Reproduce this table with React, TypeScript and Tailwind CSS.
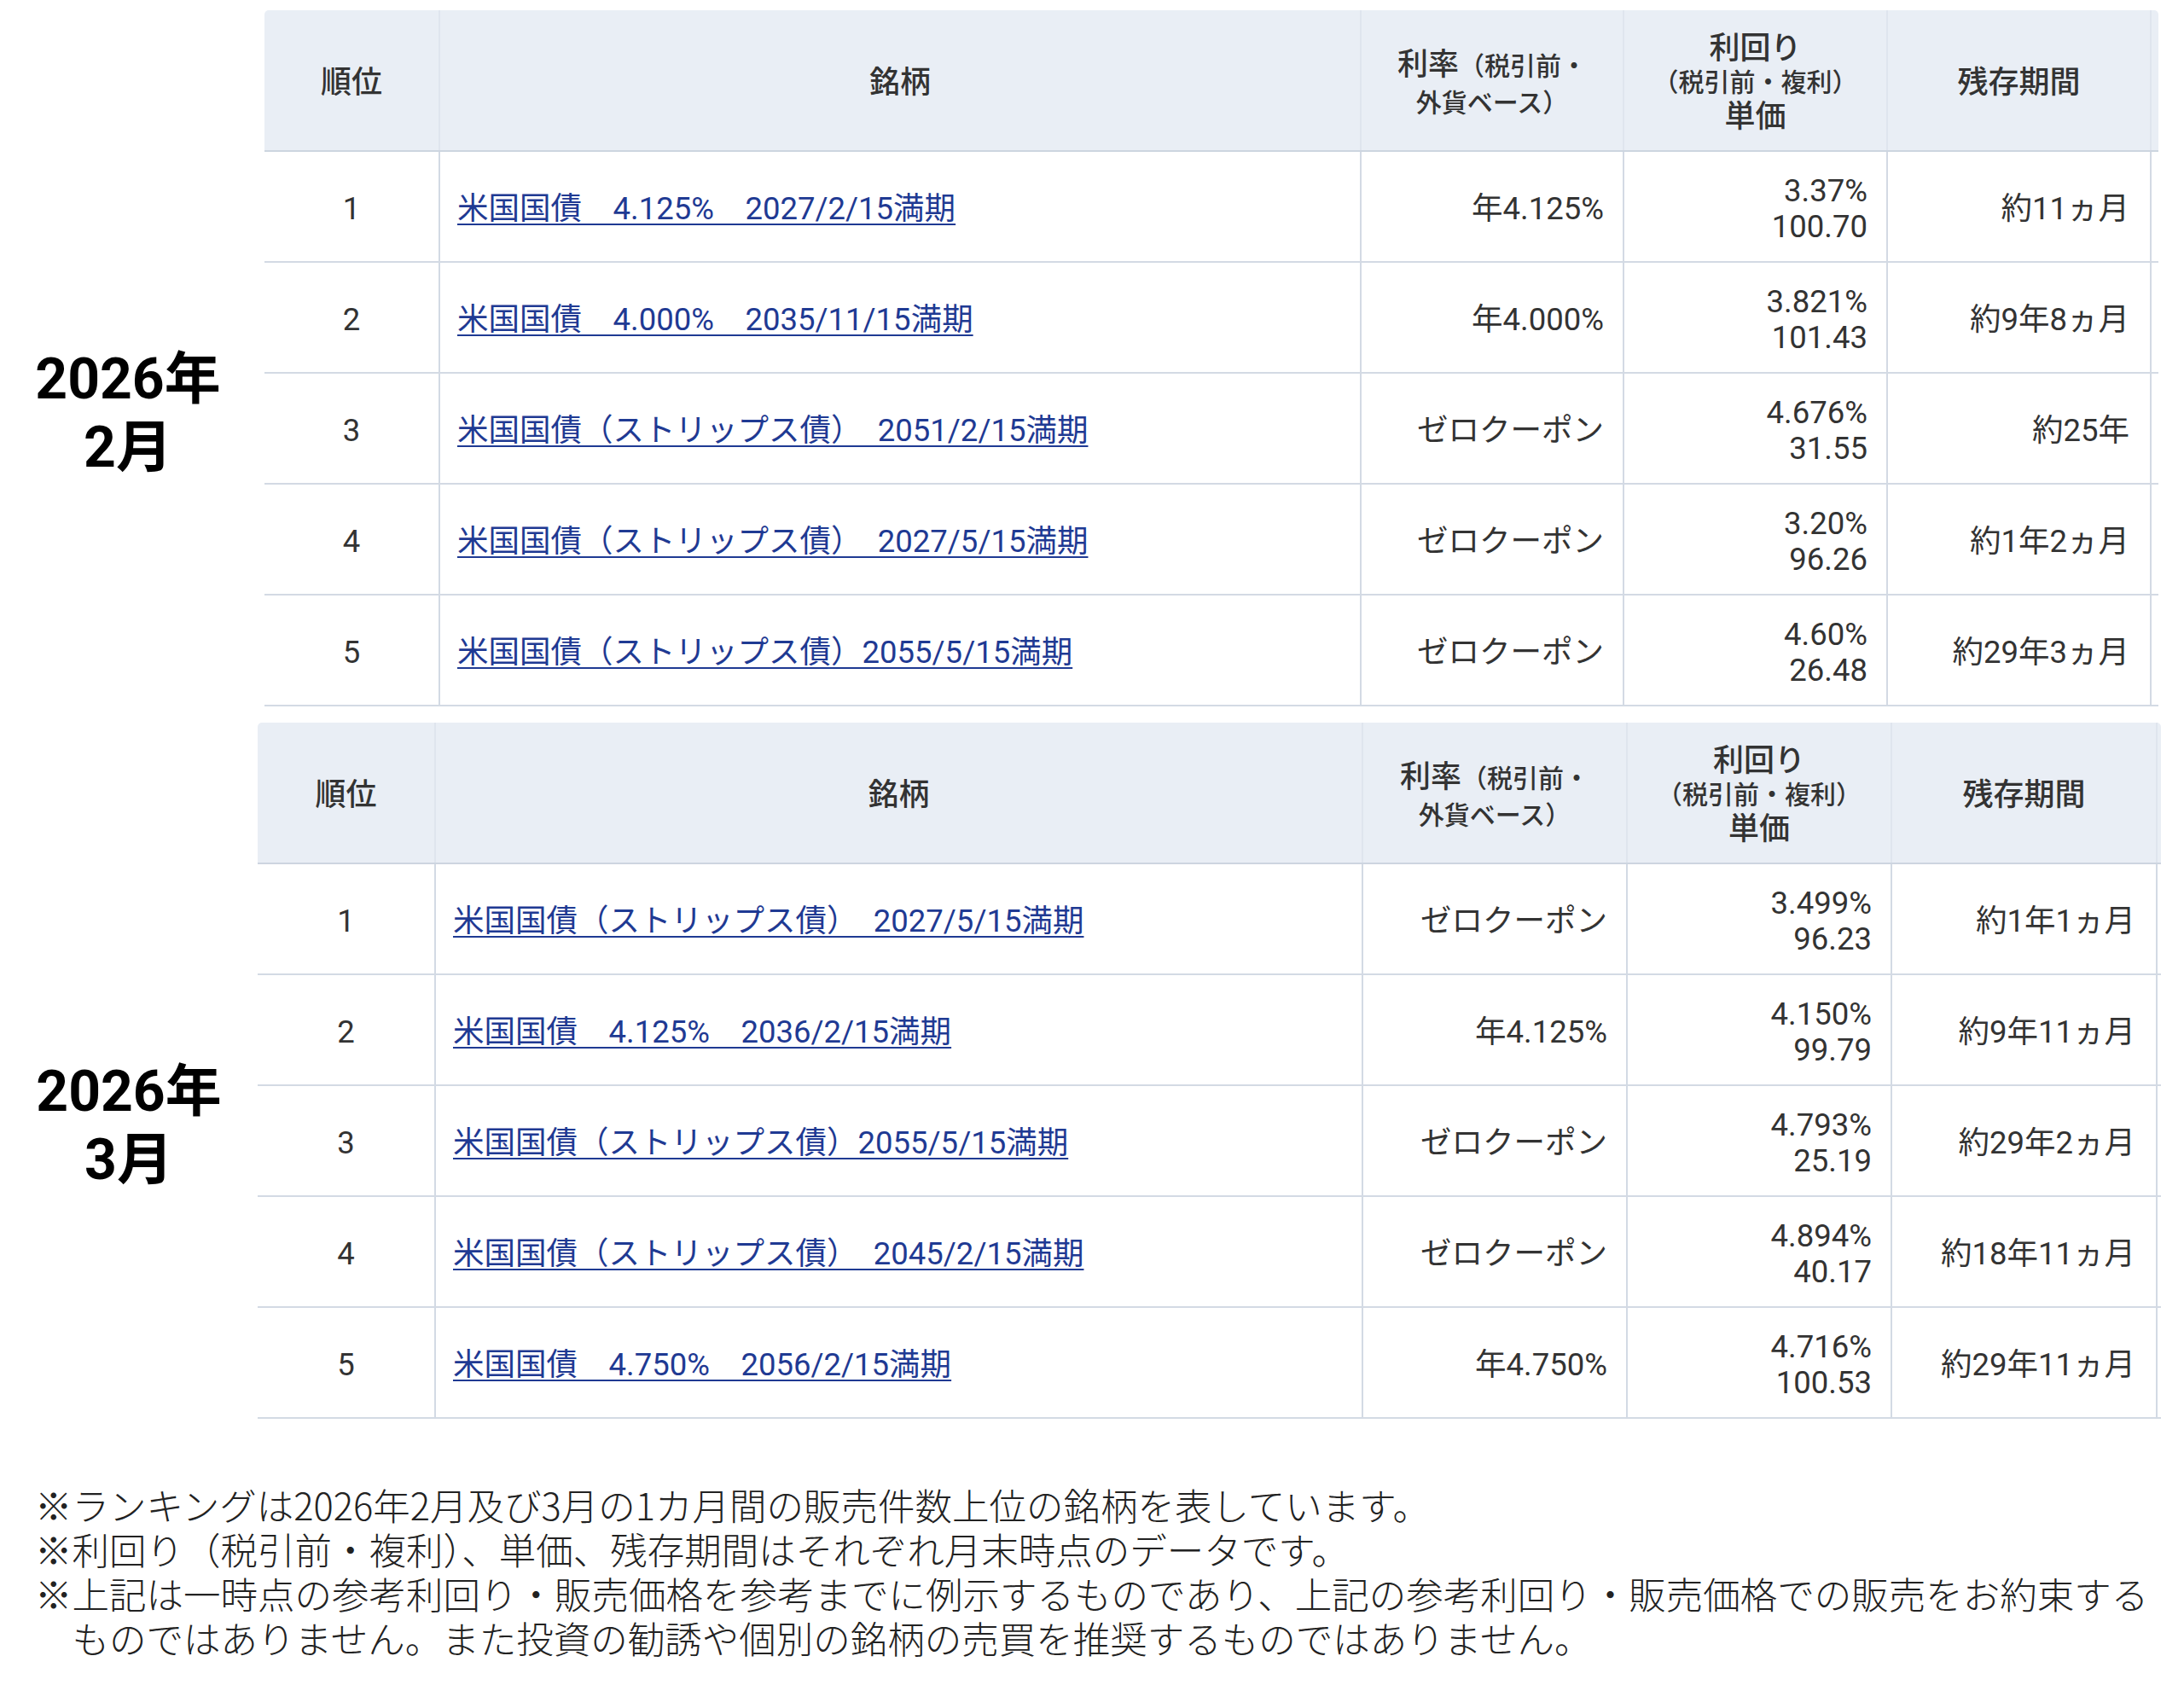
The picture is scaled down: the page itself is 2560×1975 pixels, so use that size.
import React from 'react';

type Row = { rank: number; name: string; rate: string; yld: string; price: string; term: string };

const feb: Row[] = [
  { rank: 1, name: '米国国債　4.125%　2027/2/15満期', rate: '年4.125%', yld: '3.37%', price: '100.70', term: '約11ヵ月' },
  { rank: 2, name: '米国国債　4.000%　2035/11/15満期', rate: '年4.000%', yld: '3.821%', price: '101.43', term: '約9年8ヵ月' },
  { rank: 3, name: '米国国債（ストリップス債）　2051/2/15満期', rate: 'ゼロクーポン', yld: '4.676%', price: '31.55', term: '約25年' },
  { rank: 4, name: '米国国債（ストリップス債）　2027/5/15満期', rate: 'ゼロクーポン', yld: '3.20%', price: '96.26', term: '約1年2ヵ月' },
  { rank: 5, name: '米国国債（ストリップス債）2055/5/15満期', rate: 'ゼロクーポン', yld: '4.60%', price: '26.48', term: '約29年3ヵ月' },
];

const mar: Row[] = [
  { rank: 1, name: '米国国債（ストリップス債）　2027/5/15満期', rate: 'ゼロクーポン', yld: '3.499%', price: '96.23', term: '約1年1ヵ月' },
  { rank: 2, name: '米国国債　4.125%　2036/2/15満期', rate: '年4.125%', yld: '4.150%', price: '99.79', term: '約9年11ヵ月' },
  { rank: 3, name: '米国国債（ストリップス債）2055/5/15満期', rate: 'ゼロクーポン', yld: '4.793%', price: '25.19', term: '約29年2ヵ月' },
  { rank: 4, name: '米国国債（ストリップス債）　2045/2/15満期', rate: 'ゼロクーポン', yld: '4.894%', price: '40.17', term: '約18年11ヵ月' },
  { rank: 5, name: '米国国債　4.750%　2056/2/15満期', rate: '年4.750%', yld: '4.716%', price: '100.53', term: '約29年11ヵ月' },
];

function RankTable({ rows, cols }: { rows: Row[]; cols: string }) {
  return (
    <div className="flex flex-col text-[#333]">
      {/* header */}
      <div className={`grid ${cols} h-[166px] bg-[#e9eef5] rounded-t-[5px] border-b-2 border-[#cdd5e0] font-medium`}>
        <div className="flex items-center justify-center pt-[6px] border-r-2 border-[#dfe5ee] text-[36px]">順位</div>
        <div className="flex items-center justify-center pt-[6px] border-r-2 border-[#dfe5ee] text-[36px]">銘柄</div>
        <div className="flex flex-col items-center justify-center pt-[8px] border-r-2 border-[#dfe5ee] leading-[38px]">
          <div>
            <span className="text-[36px]">利率</span>
            <span className="text-[30px]">（税引前・</span>
          </div>
          <div className="text-[30px]">外貨ベース）</div>
        </div>
        <div className="flex flex-col items-center justify-center pt-[6px] border-r-2 border-[#dfe5ee] leading-[40px]">
          <div className="text-[36px]">利回り</div>
          <div className="text-[30px]">（税引前・複利）</div>
          <div className="text-[36px]">単価</div>
        </div>
        <div className="flex items-center justify-center pt-[6px] border-r-2 border-[#dfe5ee] text-[36px]">残存期間</div>
        <div />
      </div>
      {rows.map((r) => (
        <div key={r.rank} className={`grid ${cols} h-[130px] border-b-2 border-[#d3dae4] text-[36.5px]`}>
          <div className="flex items-center justify-center pt-[6px] border-r-2 border-[#d3dae4]">{r.rank}</div>
          <div className="flex items-center pl-[20px] pt-[6px] border-r-2 border-[#d3dae4]">
            <a href="#" className="text-[#1f3a93] underline decoration-2 underline-offset-[5px] whitespace-nowrap">{r.name}</a>
          </div>
          <div className="flex items-center justify-end pr-[22px] pt-[6px] border-r-2 border-[#d3dae4]">{r.rate}</div>
          <div className="flex flex-col items-end justify-center pr-[22px] pt-[6px] border-r-2 border-[#d3dae4] leading-[42px]">
            <div>{r.yld}</div>
            <div>{r.price}</div>
          </div>
          <div className="flex items-center justify-end pr-[24px] pt-[6px] border-r-2 border-[#d3dae4]">{r.term}</div>
          <div />
        </div>
      ))}
    </div>
  );
}

function MonthLabel({ month }: { month: string }) {
  return (
    <div className="flex flex-col items-center justify-center pt-[130px] text-[66px] font-bold leading-[80px] text-black">
      <div>2026年</div>
      <div>{month}</div>
    </div>
  );
}

export default function App() {
  return (
    <div
      className="w-[2560px] min-h-[1975px] bg-white"
      style={{ fontFamily: 'Roboto, "Noto Sans CJK JP", sans-serif' }}
    >
      <div className="flex pt-[12px]">
        <div className="w-[310px] flex justify-center pr-[10px]">
          <MonthLabel month="2月" />
        </div>
        <RankTable rows={feb} cols="grid-cols-[206px_1080px_308px_309px_309px_8px]" />
      </div>
      <div className="flex pt-[19px]">
        <div className="w-[302px] flex justify-center">
          <MonthLabel month="3月" />
        </div>
        <RankTable rows={mar} cols="grid-cols-[209px_1087px_310px_310px_311px_4px]" />
      </div>
      <div
        className="pt-[75px] pl-[41px] text-[43.5px] leading-[52px] text-[#222] font-light"
        style={{ fontFamily: '"Noto Sans CJK JP", sans-serif' }}
      >
        <p>※ランキングは2026年2月及び3月の1カ月間の販売件数上位の銘柄を表しています。</p>
        <p>※利回り（税引前・複利）、単価、残存期間はそれぞれ月末時点のデータです。</p>
        <p className="pl-[1em] -indent-[1em]">
          ※上記は一時点の参考利回り・販売価格を参考までに例示するものであり、上記の参考利回り・販売価格での販売をお約束する
          <br />
          ものではありません。また投資の勧誘や個別の銘柄の売買を推奨するものではありません。
        </p>
      </div>
    </div>
  );
}
